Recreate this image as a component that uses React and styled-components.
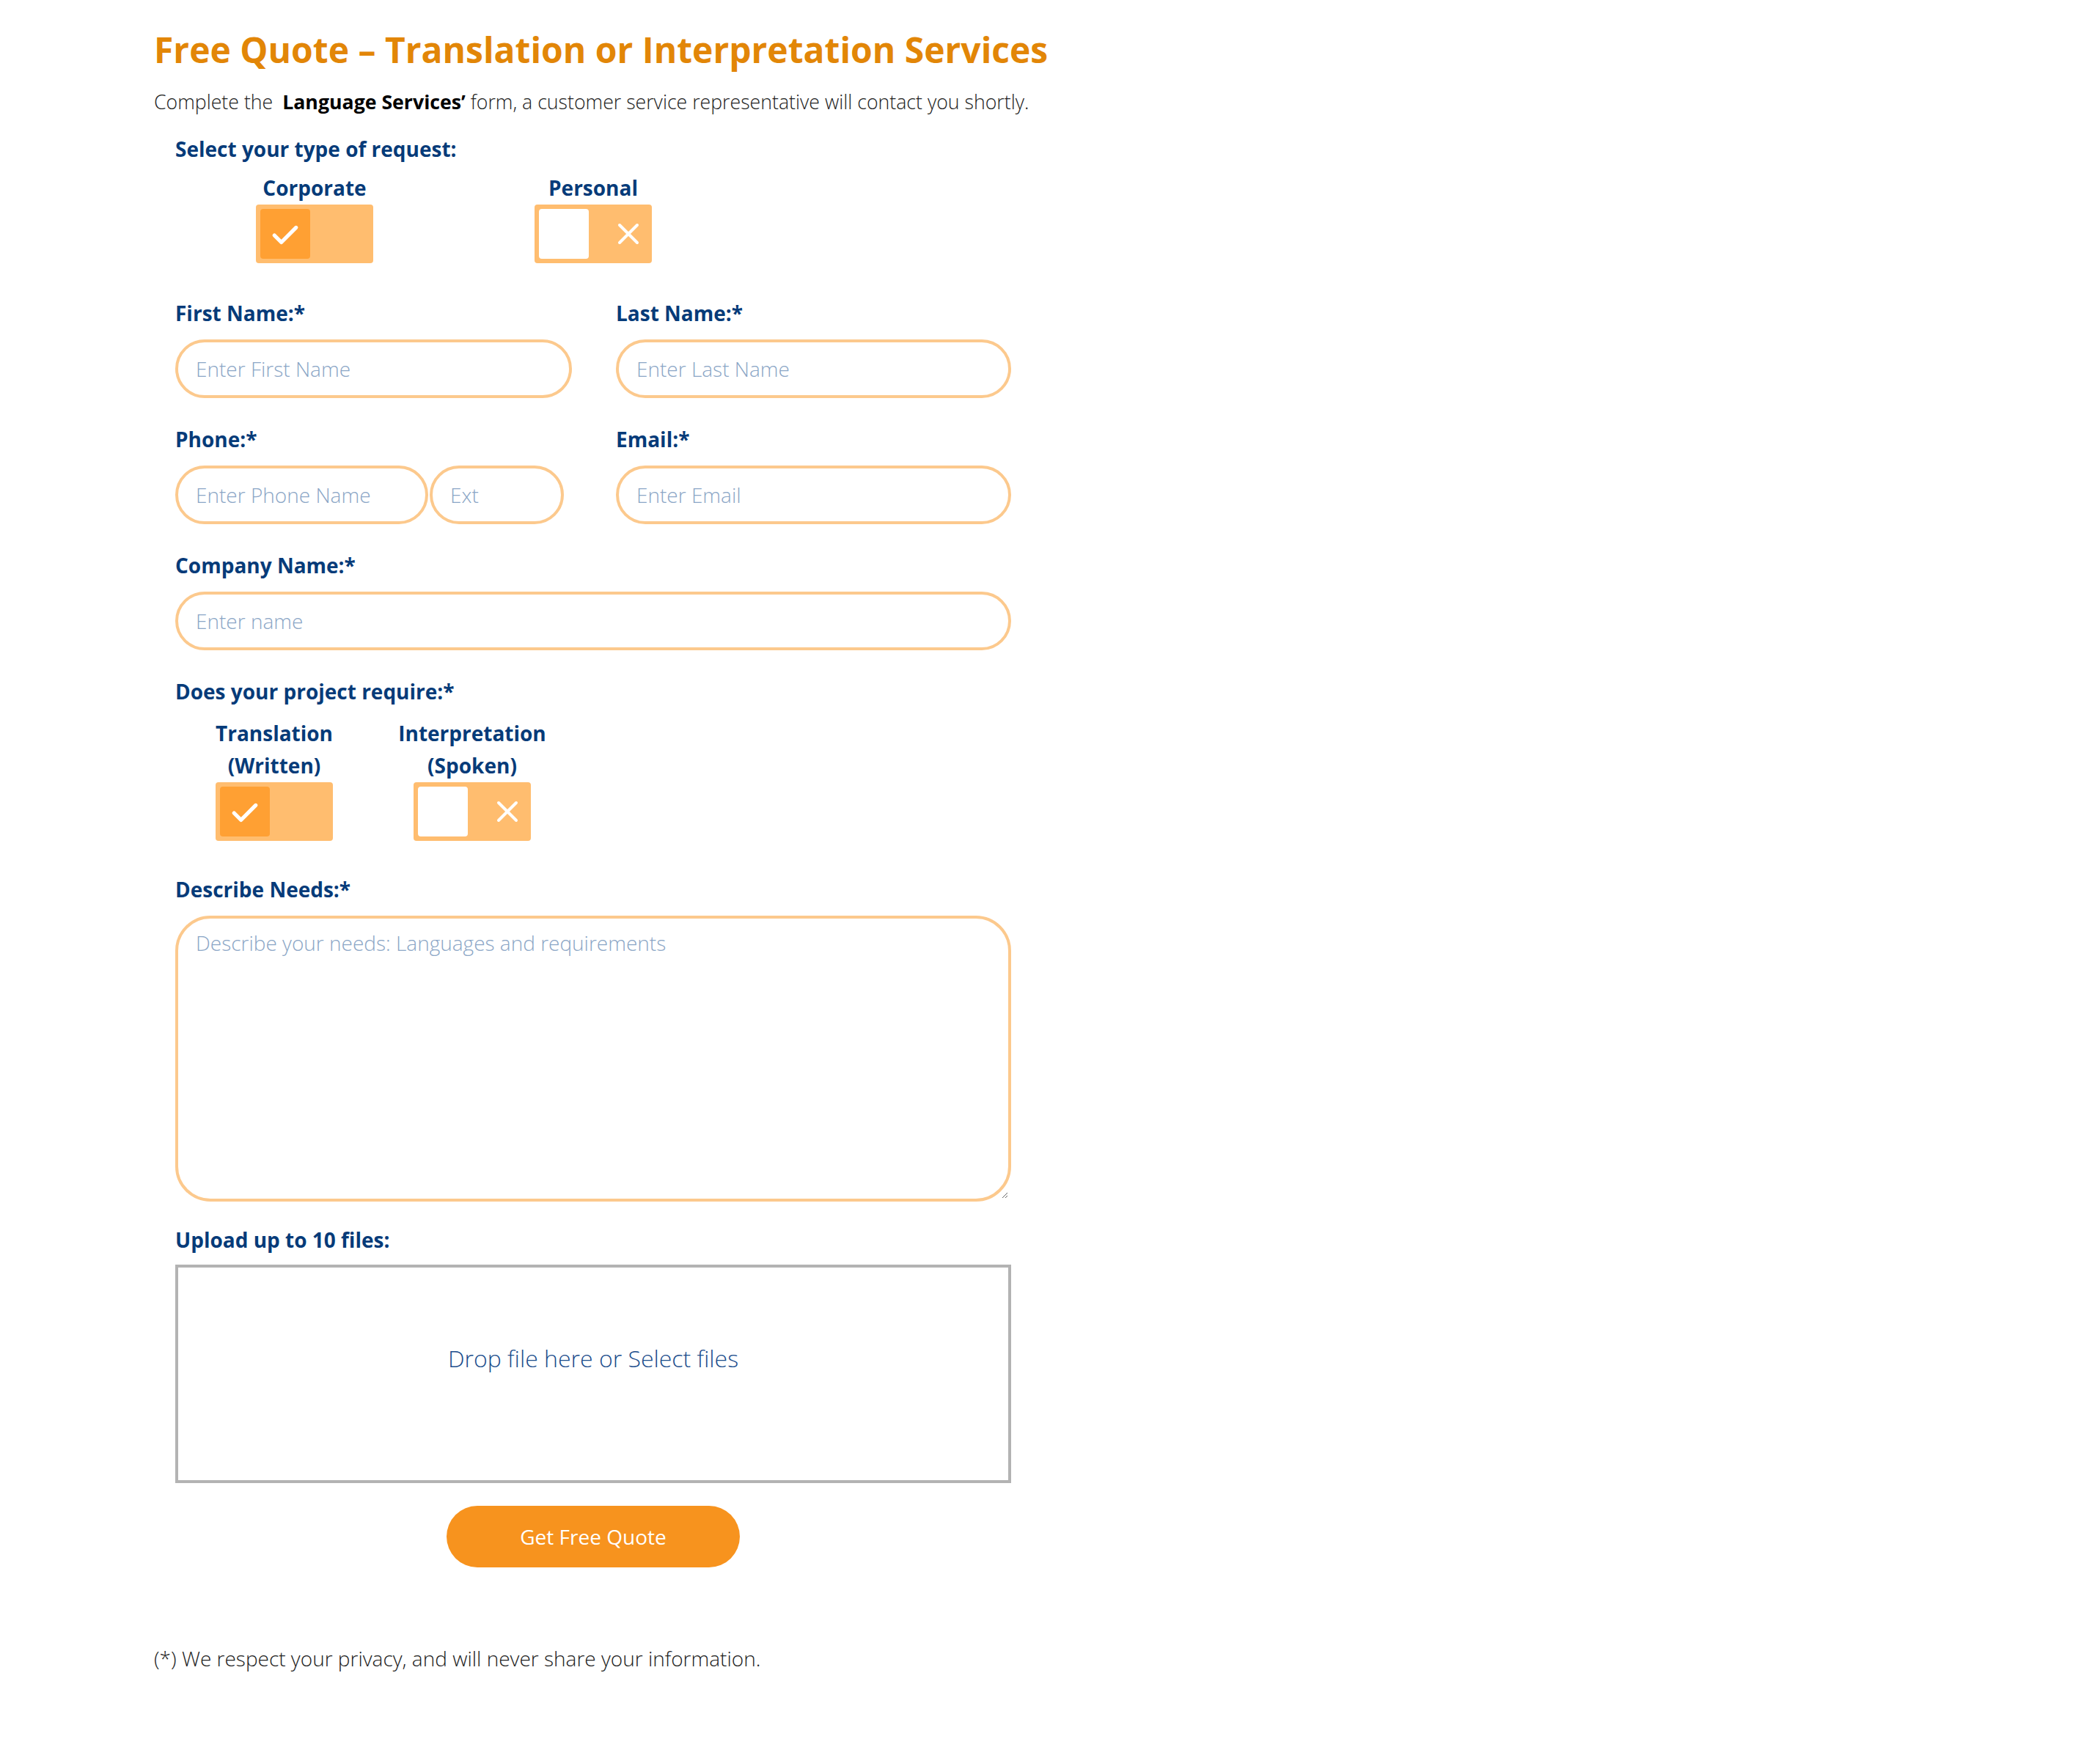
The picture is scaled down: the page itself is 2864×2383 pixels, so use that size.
import React from "react";
import styled, { createGlobalStyle } from "styled-components";

const Global = createGlobalStyle`
  html, body { margin: 0; padding: 0; background: #ffffff; }
  body { font-family: "Open Sans", "Noto Sans", sans-serif; }
  * { box-sizing: border-box; }
`;

const Page = styled.div`
  padding: 40px 0 100px 210px;
  width: 1500px;
`;

const Title = styled.h1`
  margin: 0;
  font-size: 48px;
  line-height: 56px;
  font-weight: 700;
  color: #e28607;
`;

const Intro = styled.p`
  margin: 23px 0 0;
  font-size: 26.7px;
  line-height: 40px;
  font-weight: 300;
  color: #222222;
  b { font-weight: 700; color: #000; margin-left: 6px; }
`;

const Form = styled.form`
  margin-left: 29px;
  width: 1140px;
  display: flex;
  flex-direction: column;
`;

const Label = styled.label`
  display: block;
  font-size: 28px;
  line-height: 40px;
  font-weight: 700;
  color: #063b79;
`;

const Section = styled.div`
  margin-top: ${(p) => p.$top || 0}px;
`;

const ToggleRow = styled.div`
  display: grid;
  grid-template-columns: repeat(${(p) => p.$cols}, ${(p) => p.$w}px);
  margin-top: ${(p) => p.$gap}px;
`;

const ToggleItem = styled.div`
  display: flex;
  flex-direction: column;
  align-items: center;
  text-align: center;
`;

const ToggleCaption = styled.span`
  font-size: 28px;
  line-height: 44px;
  font-weight: 700;
  color: #063b79;
  width: ${(p) => p.$w || "auto"};
`;

const Toggle = styled.div`
  position: relative;
  width: 160px;
  height: 80px;
  border-radius: 4px;
  background: #ffbd6f;
  margin-top: 1px;
`;

const Knob = styled.div`
  position: absolute;
  top: 6px;
  left: 6px;
  width: 68px;
  height: 68px;
  border-radius: 4px;
  background: ${(p) => (p.$on ? "#ffa033" : "#ffffff")};
  display: flex;
  align-items: center;
  justify-content: center;
  padding-top: 4px;
`;

const Cross = styled.div`
  position: absolute;
  right: 12px;
  top: 0;
  bottom: 0;
  width: 40px;
  display: flex;
  align-items: center;
  justify-content: center;
`;

const Grid2 = styled.div`
  display: grid;
  grid-template-columns: 541px 539px;
  column-gap: 60px;
  margin-top: ${(p) => p.$top || 0}px;
`;

const Field = styled.div`
  display: flex;
  flex-direction: column;
  gap: 16px;
`;

const InputRow = styled.div`
  display: flex;
  gap: 2px;
`;

const Input = styled.input`
  width: ${(p) => p.$w || "100%"};
  height: 80px;
  border: 4px solid #fcc98d;
  border-radius: 40px;
  padding: 0 24px;
  font-family: "Open Sans", sans-serif;
  font-size: 28px;
  font-weight: 300;
  color: #333;
  background: #fff;
  outline: none;
  &::placeholder { color: #8ba6c6; opacity: 1; }
`;

const TextArea = styled.textarea`
  display: block;
  width: 100%;
  height: 390px;
  border: 4px solid #fcc98d;
  border-radius: 48px;
  padding: 14px 24px;
  font-family: "Open Sans", sans-serif;
  font-size: 28px;
  font-weight: 300;
  line-height: 38px;
  color: #333;
  outline: none;
  &::placeholder { color: #8ba6c6; opacity: 1; }
`;

const DropZone = styled.div`
  width: 100%;
  height: 298px;
  border: 4px solid #b3b3b3;
  display: flex;
  align-items: center;
  justify-content: center;
  padding-bottom: 44px;
  font-size: 32px;
  font-weight: 300;
  color: #1b4d8c;
`;

const ButtonRow = styled.div`
  display: flex;
  justify-content: center;
  margin-top: 31px;
`;

const Button = styled.button`
  width: 400px;
  height: 84px;
  border: none;
  border-radius: 42px;
  background: #f7931e;
  color: #ffffff;
  font-family: "Open Sans", sans-serif;
  font-size: 28px;
  font-weight: 400;
`;

const Footer = styled.p`
  margin: 104px 0 0;
  font-size: 28px;
  line-height: 40px;
  font-weight: 300;
  color: #222;
`;

const Check = () => (
  <svg width="38" height="30" viewBox="0 0 36 28">
    <path d="M4 14 L13 23 L32 4" stroke="#fff" strokeWidth="5" fill="none" strokeLinecap="round" strokeLinejoin="round" />
  </svg>
);

const XMark = () => (
  <svg width="32" height="32" viewBox="0 0 32 32">
    <path d="M4 4 L28 28 M28 4 L4 28" stroke="#fff" strokeWidth="4" fill="none" strokeLinecap="round" />
  </svg>
);

const Switch = ({ on }) => (
  <Toggle>
    <Knob $on={on}>{on && <Check />}</Knob>
    {!on && (
      <Cross>
        <XMark />
      </Cross>
    )}
  </Toggle>
);

export default function App() {
  return (
    <>
      <Global />
      <Page>
        <Title>Free Quote – Translation or Interpretation Services</Title>
        <Intro>
          Complete the <b>Language Services’</b> form, a customer service representative will contact you shortly.
        </Intro>
        <Form onSubmit={(e) => e.preventDefault()}>
          <Section $top={24}>
            <Label>Select your type of request:</Label>
            <ToggleRow $cols={3} $w={380} $gap={11}>
              <ToggleItem>
                <ToggleCaption>Corporate</ToggleCaption>
                <Switch on />
              </ToggleItem>
              <ToggleItem>
                <ToggleCaption>Personal</ToggleCaption>
                <Switch />
              </ToggleItem>
            </ToggleRow>
          </Section>

          <Grid2 $top={48}>
            <Field>
              <Label>First Name:*</Label>
              <Input placeholder="Enter First Name" />
            </Field>
            <Field>
              <Label>Last Name:*</Label>
              <Input placeholder="Enter Last Name" />
            </Field>
          </Grid2>

          <Grid2 $top={36}>
            <Field>
              <Label>Phone:*</Label>
              <InputRow>
                <Input $w="345px" placeholder="Enter Phone Name" />
                <Input $w="183px" placeholder="Ext" />
              </InputRow>
            </Field>
            <Field>
              <Label>Email:*</Label>
              <Input placeholder="Enter Email" />
            </Field>
          </Grid2>

          <Section $top={36}>
            <Field>
              <Label>Company Name:*</Label>
              <Input placeholder="Enter name" />
            </Field>
          </Section>

          <Section $top={36}>
            <Label>Does your project require:*</Label>
            <ToggleRow $cols={2} $w={270} $gap={15}>
              <ToggleItem>
                <ToggleCaption $w="200px">Translation (Written)</ToggleCaption>
                <Switch on />
              </ToggleItem>
              <ToggleItem>
                <ToggleCaption $w="220px">Interpretation (Spoken)</ToggleCaption>
                <Switch />
              </ToggleItem>
            </ToggleRow>
          </Section>

          <Section $top={46}>
            <Field>
              <Label>Describe Needs:*</Label>
              <TextArea placeholder="Describe your needs: Languages and requirements" />
            </Field>
          </Section>

          <Section $top={32}>
            <Label>Upload up to 10 files:</Label>
            <Section $top={14}>
              <DropZone>Drop file here or Select files</DropZone>
            </Section>
          </Section>

          <ButtonRow>
            <Button type="submit">Get Free Quote</Button>
          </ButtonRow>
        </Form>
        <Footer>(*) We respect your privacy, and will never share your information.</Footer>
      </Page>
    </>
  );
}
